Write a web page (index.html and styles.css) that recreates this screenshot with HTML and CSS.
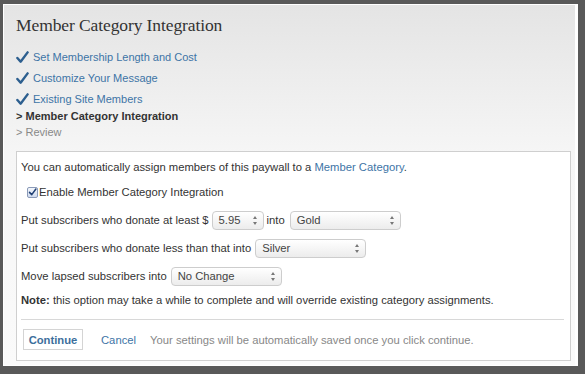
FILE: index.html
```html
<!DOCTYPE html>
<html>
<head>
    <meta charset="utf-8">
    <title>Member Category Integration</title>
    <link rel="stylesheet" href="styles.css">
</head>
<body>
    <div class="panel">
        <h1 class="panel-title">Member Category Integration</h1>

        <ul class="steps">
            <li class="step done">
                <svg class="check" viewBox="0 0 14 14" width="13" height="13"><path d="M1.5 7.5 L5 11.5 L12.5 1.5" fill="none" stroke="#2d5f8f" stroke-width="2.6" stroke-linecap="round" stroke-linejoin="round"/></svg>
                <a href="#">Set Membership Length and Cost</a>
            </li>
            <li class="step done">
                <svg class="check" viewBox="0 0 14 14" width="13" height="13"><path d="M1.5 7.5 L5 11.5 L12.5 1.5" fill="none" stroke="#2d5f8f" stroke-width="2.6" stroke-linecap="round" stroke-linejoin="round"/></svg>
                <a href="#">Customize Your Message</a>
            </li>
            <li class="step done">
                <svg class="check" viewBox="0 0 14 14" width="13" height="13"><path d="M1.5 7.5 L5 11.5 L12.5 1.5" fill="none" stroke="#2d5f8f" stroke-width="2.6" stroke-linecap="round" stroke-linejoin="round"/></svg>
                <a href="#">Existing Site Members</a>
            </li>
            <li class="step current">&gt; Member Category Integration</li>
            <li class="step todo">&gt; Review</li>
        </ul>

        <div class="form-box">
            <p class="intro">You can automatically assign members of this paywall to a <a href="#">Member Category</a>.</p>

            <label class="check-row">
                <span class="checkbox">
                    <svg viewBox="0 0 12 12" width="10" height="10"><path d="M2 6.5 L5 9.5 L10.5 2" fill="none" stroke="#1f3f73" stroke-width="2" stroke-linecap="round" stroke-linejoin="round"/></svg>
                </span>Enable Member Category Integration
            </label>

            <div class="form-row first">
                Put subscribers who donate at least $
                <span class="select number">5.95<span class="arrows"></span></span>
                into
                <span class="select gold">Gold<span class="arrows"></span></span>
            </div>

            <div class="form-row">
                Put subscribers who donate less than that into
                <span class="select silver">Silver<span class="arrows"></span></span>
            </div>

            <div class="form-row">
                Move lapsed subscribers into
                <span class="select lapsed">No Change<span class="arrows"></span></span>
            </div>

            <p class="note"><b>Note:</b> this option may take a while to complete and will override existing category assignments.</p>

            <div class="actions">
                <button class="continue">Continue</button>
                <a href="#" class="cancel">Cancel</a>
                <span class="saved">Your settings will be automatically saved once you click continue.</span>
            </div>
        </div>
    </div>
</body>
</html>
```

FILE: styles.css
```css
* {
    margin: 0;
    padding: 0;
    box-sizing: border-box;
}

body {
    background-color: #595959;
    padding: 4px 7px 8px 3px;
    height: 374px;
    font-family: "Liberation Sans", Arial, sans-serif;
    font-size: 11.25px;
    color: #333;
}

a {
    color: #3d74a6;
    text-decoration: none;
}

.panel {
    height: 100%;
    border: 1px solid #fff;
    border-right-width: 3px;
    background: linear-gradient(#e4e4e4, #f6f6f6 150px, #fafafa);
    padding: 7px 4px 0 12px;
}

.panel-title {
    font-family: "Liberation Serif", Georgia, serif;
    font-weight: normal;
    font-size: 17.5px;
    letter-spacing: -0.1px;
    line-height: 26px;
    color: #333;
    margin-bottom: 9px;
}

.steps {
    list-style: none;
    margin-bottom: 10px;
}

.step {
    display: flex;
    align-items: center;
    font-size: 11px;
}

.step.done {
    line-height: 21px;
}

.step .check {
    margin-right: 4px;
}

.step.current {
    line-height: 13px;
    font-weight: bold;
    color: #333;
}

.step.todo {
    line-height: 18px;
    color: #888;
}

.form-box {
    background: #fff;
    border: 1px solid #cfcfcf;
    padding: 8px 6px 10px 4px;
}

.intro {
    line-height: 15px;
}

.check-row {
    display: flex;
    align-items: center;
    margin: 10px 0 0 6px;
    line-height: 14px;
}

.checkbox {
    width: 11px;
    height: 11px;
    border: 1px solid #8a9ab8;
    border-radius: 2px;
    background: linear-gradient(#f4f7fc, #cfdaee);
    display: flex;
    align-items: center;
    justify-content: center;
    margin-right: 1px;
}

.form-row {
    display: flex;
    align-items: center;
    gap: 4px;
    height: 20px;
    margin-top: 8px;
}

.form-row.first {
    gap: 3px;
    margin-top: 11px;
}

.select {
    position: relative;
    display: inline-block;
    height: 19px;
    line-height: 17px;
    border: 1px solid #cdcdcd;
    border-radius: 4px;
    background: linear-gradient(#ffffff, #ececec);
    color: #444;
    padding-left: 6px;
}

.select .arrows {
    position: absolute;
    right: 5px;
    top: 4px;
    width: 5px;
    height: 9px;
}

.select .arrows::before,
.select .arrows::after {
    content: "";
    position: absolute;
    left: 0;
    border-left: 2.5px solid transparent;
    border-right: 2.5px solid transparent;
}

.select .arrows::before {
    top: 0;
    border-bottom: 3px solid #777;
}

.select .arrows::after {
    bottom: 0;
    border-top: 3px solid #777;
}

.select.number {
    width: 52px;
}

.select.gold {
    width: 111px;
    margin-left: 2px;
}

.select.silver {
    width: 111px;
}

.select.lapsed {
    width: 111px;
}

.note {
    margin-top: 7px;
    line-height: 14px;
}

.actions {
    border-top: 1px solid #d8d8d8;
    margin-top: 12px;
    padding-top: 9px;
    display: flex;
    align-items: center;
}

.continue {
    font-family: "Liberation Sans", Arial, sans-serif;
    font-size: 11.25px;
    font-weight: bold;
    color: #3d6f9c;
    background: #fff;
    border: 1px solid #d4d4d4;
    height: 21px;
    width: 60px;
    margin-left: 2px;
}

.cancel {
    margin-left: 18px;
}

.saved {
    margin-left: 14px;
    color: #888;
}
```
